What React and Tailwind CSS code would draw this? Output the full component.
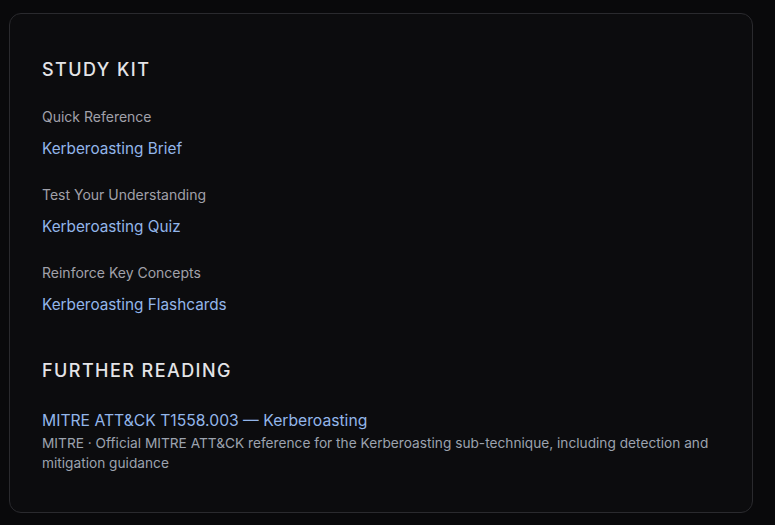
import React from "react";

const kit = [
  { label: "Quick Reference", title: "Kerberoasting Brief" },
  { label: "Test Your Understanding", title: "Kerberoasting Quiz" },
  { label: "Reinforce Key Concepts", title: "Kerberoasting Flashcards" },
];

function App() {
  return (
    <div className="min-h-screen bg-[#09090b] pt-[13px] pl-[9px] pb-[12px]" style={{ fontFamily: "Inter, 'Noto Sans', sans-serif" }}>
      <div className="w-[744px] rounded-xl border border-[#2a2a2e] bg-[#0c0c0e] px-8 pt-[42px] pb-[39px]">
        <h2 className="text-lg font-medium tracking-[0.08em] text-[#e4e4e7] leading-7">STUDY KIT</h2>
        <div className="mt-[23px] flex flex-col gap-6">
          {kit.map((k) => (
            <div key={k.title}>
              <div className="text-sm leading-5 text-[#a1a1aa]">{k.label}</div>
              <a href="#" className="mt-[10px] block text-[15.3px] leading-6 text-[#93b6ea]">
                {k.title}
              </a>
            </div>
          ))}
        </div>

        <h2 className="mt-10 text-lg font-medium tracking-[0.08em] text-[#e4e4e7] leading-7">FURTHER READING</h2>
        <div className="mt-6">
          <a href="#" className="block text-[15.7px] leading-6 text-[#93b6ea]">
            MITRE ATT&amp;CK T1558.003 — Kerberoasting
          </a>
          <p className="text-[13.7px] leading-5 text-[#9ca3af]">
            MITRE · Official MITRE ATT&amp;CK reference for the Kerberoasting sub-technique, including detection and mitigation guidance
          </p>
        </div>
      </div>
    </div>
  );
}

export default App;
